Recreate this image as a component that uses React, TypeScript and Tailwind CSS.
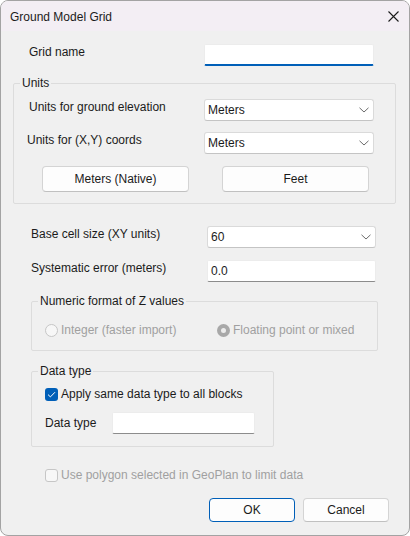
import React from "react";

function Chevron() {
  return (
    <svg width="10" height="6" viewBox="0 0 10 6" className="shrink-0">
      <path d="M0.5 0.8 L5 5 L9.5 0.8" fill="none" stroke="#6b6b6b" strokeWidth="1" />
    </svg>
  );
}

function Select({ value, w }: { value: string; w: string }) {
  return (
    <div
      className={`${w} h-[22px] bg-white border border-[#dadada] border-b-[#c4c4c4] rounded-[3px] flex items-center justify-between pl-[3px] pr-[4px]`}
    >
      <span>{value}</span>
      <Chevron />
    </div>
  );
}

function TextBox({ value, w, focused }: { value?: string; w: string; focused?: boolean }) {
  return (
    <div
      className={`${w} h-[22px] bg-white border border-[#ececec] ${
        focused ? "border-b-2 border-b-[#005fb8]" : "border-b-[#8c8c8c]"
      } rounded-[2px] flex items-center pl-[3px]`}
    >
      <span>{value ?? ""}</span>
    </div>
  );
}

function Button({ label, w, h, primary }: { label: string; w: string; h: string; primary?: boolean }) {
  return (
    <div
      className={`${w} ${h} rounded-[4px] bg-[#fdfdfd] border ${
        primary ? "border-[#005fb8]" : "border-[#d4d4d4] border-b-[#c0c0c0]"
      } flex items-center justify-center`}
    >
      {label}
    </div>
  );
}

export default function App() {
  return (
    <div className="w-[410px] h-[536px] bg-[#f0f0f0] border border-[#a3a3a3] rounded-[8px] overflow-hidden flex flex-col font-['Liberation_Sans',Arial,sans-serif] text-[12px] leading-[16px] text-[#1b1b1b]">
      {/* Title bar */}
      <div className="h-[30px] shrink-0 bg-[#f3eef4] flex items-center justify-between pl-[9px] pr-[10px]">
        <span className="text-[12px] mt-[1px]">Ground Model Grid</span>
        <svg width="11" height="11" viewBox="0 0 11 11">
          <path d="M0.5 0.5 L10.5 10.5 M10.5 0.5 L0.5 10.5" stroke="#1b1b1b" strokeWidth="1.1" />
        </svg>
      </div>

      {/* Body */}
      <div className="flex flex-col">
        {/* Grid name */}
        <div className="mt-[13px] flex items-start pl-[28px]">
          <span className="w-[175px]">Grid name</span>
          <TextBox w="w-[170px]" focused />
        </div>

        {/* Units group */}
        <fieldset className="mt-[9px] ml-[12px] w-[383px] border border-[#dcdcdc] rounded-[2px] pb-[11px]">
          <legend className="ml-[6px] px-[2px] leading-[16px]">Units</legend>
          <div className="mt-[8px] flex items-start pl-[15px]">
            <span className="w-[175px]">Units for ground elevation</span>
            <Select value="Meters" w="w-[170px]" />
          </div>
          <div className="mt-[11px] flex items-start pl-[13px]">
            <span className="w-[177px]">Units for (X,Y) coords</span>
            <Select value="Meters" w="w-[170px]" />
          </div>
          <div className="mt-[12px] flex pl-[28px] gap-[33px]">
            <Button label="Meters (Native)" w="w-[147px]" h="h-[26px]" />
            <Button label="Feet" w="w-[147px]" h="h-[26px]" />
          </div>
        </fieldset>

        {/* Base cell size */}
        <div className="mt-[22px] flex items-start pl-[30px]">
          <span className="w-[176px]">Base cell size (XY units)</span>
          <Select value="60" w="w-[169px]" />
        </div>
        <div className="mt-[12px] flex items-start pl-[30px]">
          <span className="w-[176px]">Systematic error (meters)</span>
          <TextBox value="0.0" w="w-[169px]" />
        </div>

        {/* Numeric format group */}
        <fieldset className="mt-[11px] ml-[30px] w-[347px] border border-[#dcdcdc] rounded-[2px] pb-[12px]">
          <legend className="ml-[6px] px-[2px] leading-[16px]">Numeric format of Z values</legend>
          <div className="mt-[13px] flex items-center pl-[13px] text-[#a0a0a0]">
            <div className="w-[172px] flex items-center gap-[3px]">
              <span className="w-[13px] h-[13px] rounded-full border border-[#c6c6c6] bg-[#f7f7f7] shrink-0" />
              <span>Integer (faster import)</span>
            </div>
            <div className="flex items-center gap-[3px]">
              <span className="w-[13px] h-[13px] rounded-full bg-[#a8a8a8] flex items-center justify-center shrink-0">
                <span className="w-[5px] h-[5px] rounded-full bg-[#ececec]" />
              </span>
              <span>Floating point or mixed</span>
            </div>
          </div>
        </fieldset>

        {/* Data type group */}
        <fieldset className="mt-[12px] ml-[30px] w-[243px] border border-[#dcdcdc] rounded-[2px] pb-[12px]">
          <legend className="ml-[6px] px-[2px] leading-[16px]">Data type</legend>
          <div className="mt-[7px] flex items-center pl-[13px] gap-[3px]">
            <span className="w-[13px] h-[13px] rounded-[3px] bg-[#005fb8] flex items-center justify-center shrink-0">
              <svg width="9" height="7" viewBox="0 0 9 7">
                <path d="M1 3.6 L3.4 5.9 L8 1.2" fill="none" stroke="white" strokeWidth="1" />
              </svg>
            </span>
            <span>Apply same data type to all blocks</span>
          </div>
          <div className="mt-[10px] flex items-center pl-[13px]">
            <span className="w-[67px]">Data type</span>
            <TextBox w="w-[143px]" />
          </div>
        </fieldset>

        {/* Polygon checkbox */}
        <div className="mt-[20px] ml-[44px] flex items-center gap-[3px] text-[#a0a0a0]">
          <span className="w-[13px] h-[13px] rounded-[3px] border border-[#c6c6c6] bg-[#f7f7f7] shrink-0" />
          <span>Use polygon selected in GeoPlan to limit data</span>
        </div>

        {/* Buttons */}
        <div className="mt-[15px] flex justify-end pr-[20px] gap-[8px]">
          <Button label="OK" w="w-[86px]" h="h-[24px]" primary />
          <Button label="Cancel" w="w-[86px]" h="h-[24px]" />
        </div>
      </div>
    </div>
  );
}
